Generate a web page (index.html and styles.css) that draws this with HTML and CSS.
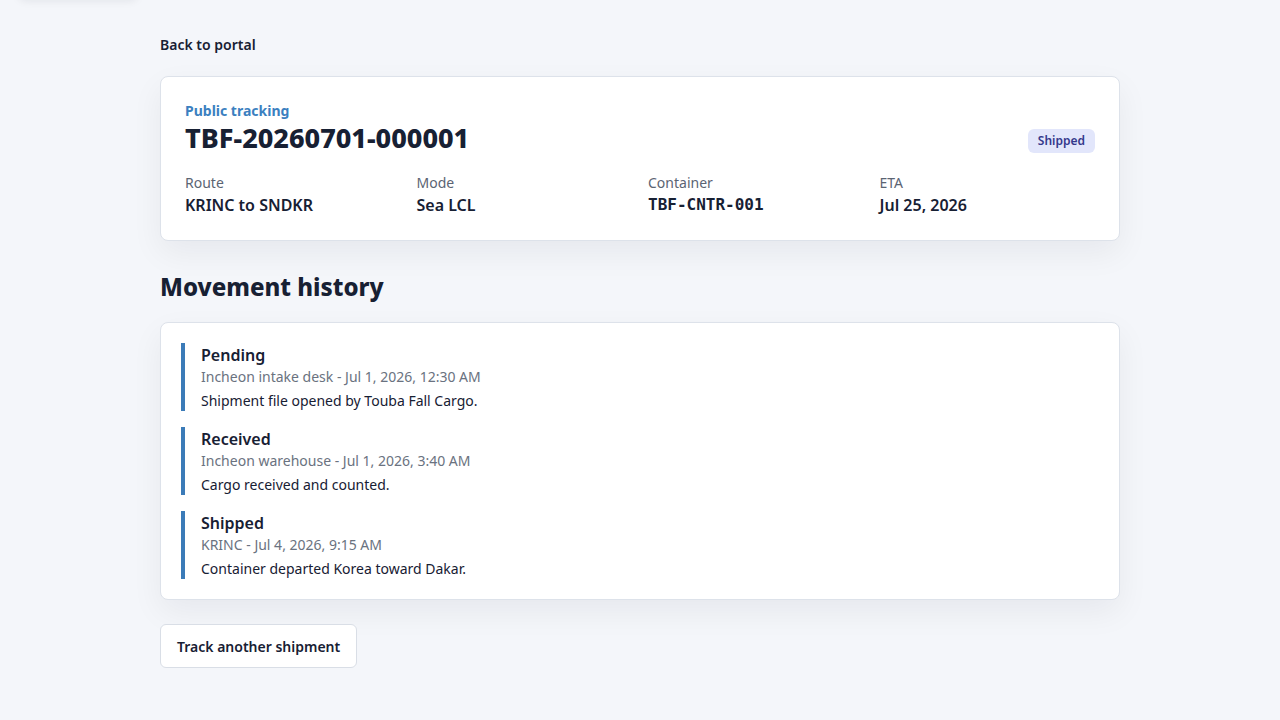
FILE: index.html
```html
<!DOCTYPE html>
<html lang="en">
<head>
<meta charset="utf-8">
<title>Public tracking</title>
<link rel="stylesheet" href="styles.css">
</head>
<body>
<div class="toast-ghost" aria-hidden="true"></div>
<main class="page" id="main">
  <a class="back-link" href="#">Back to portal</a>

  <section class="card summary">
    <div class="summary-head">
      <div>
        <div class="eyebrow">Public tracking</div>
        <h1 class="ref">TBF-20260701-000001</h1>
      </div>
      <span class="badge">Shipped</span>
    </div>
    <dl class="facts">
      <div class="fact"><dt>Route</dt><dd>KRINC to SNDKR</dd></div>
      <div class="fact"><dt>Mode</dt><dd>Sea LCL</dd></div>
      <div class="fact"><dt>Container</dt><dd class="mono">TBF-CNTR-001</dd></div>
      <div class="fact"><dt>ETA</dt><dd>Jul 25, 2026</dd></div>
    </dl>
  </section>

  <h2 class="section-title">Movement history</h2>

  <section class="card history">
    <div class="event">
      <div class="event-title">Pending</div>
      <div class="event-meta">Incheon intake desk - Jul 1, 2026, 12:30 AM</div>
      <div class="event-note">Shipment file opened by Touba Fall Cargo.</div>
    </div>
    <div class="event">
      <div class="event-title">Received</div>
      <div class="event-meta">Incheon warehouse - Jul 1, 2026, 3:40 AM</div>
      <div class="event-note">Cargo received and counted.</div>
    </div>
    <div class="event">
      <div class="event-title">Shipped</div>
      <div class="event-meta">KRINC - Jul 4, 2026, 9:15 AM</div>
      <div class="event-note">Container departed Korea toward Dakar.</div>
    </div>
  </section>

  <button class="btn" type="button">Track another shipment</button>
</main>
</body>
</html>
```

FILE: styles.css
```css
* { box-sizing: border-box; }

html, body {
  margin: 0;
  padding: 0;
}

body {
  background: #f4f6fa;
  font-family: "Noto Sans", "Open Sans", sans-serif;
  color: #172033;
  min-height: 720px;
}

.toast-ghost {
  position: absolute;
  left: 18px;
  top: -46px;
  width: 120px;
  height: 44px;
  background: #ffffff;
  border-radius: 8px;
  box-shadow: 0 3px 8px rgba(15, 23, 42, 0.08);
}

.page {
  width: 960px;
  margin: 0 auto;
  padding-top: 35px;
  display: flex;
  flex-direction: column;
  align-items: stretch;
}

.back-link {
  align-self: flex-start;
  font-size: 14px;
  line-height: 20px;
  font-weight: 600;
  color: #172033;
  text-decoration: none;
  margin-bottom: 21px;
}

.card {
  background: #ffffff;
  border: 1px solid #dde2ea;
  border-radius: 8px;
  box-shadow: 0 12px 32px rgba(15, 23, 42, 0.06);
}

.summary {
  padding: 24px;
}

.summary-head {
  display: flex;
  justify-content: space-between;
  align-items: flex-end;
}

.eyebrow {
  font-size: 14px;
  line-height: 20px;
  font-weight: 700;
  color: #3b80c0;
}

.ref {
  margin: 0;
  font-size: 27px;
  line-height: 33px;
  font-weight: 800;
  color: #172033;
}

.badge {
  display: inline-block;
  font-size: 12px;
  line-height: 24px;
  font-weight: 600;
  color: #34388c;
  background: #e2e6fb;
  border-radius: 6px;
  padding: 0 10px;
  margin-bottom: 1px;
}

.facts {
  display: grid;
  grid-template-columns: repeat(4, 1fr);
  gap: 16px;
  margin: 19px 0 0;
}

.fact dt {
  font-size: 14px;
  line-height: 20px;
  color: #5b6473;
}

.fact dd {
  margin: 1px 0 0;
  font-size: 16px;
  line-height: 22px;
  font-weight: 600;
  color: #172033;
}

.fact dd.mono {
  font-family: "DejaVu Sans Mono", monospace;
  font-size: 16px;
}

.section-title {
  margin: 28px 0 17px;
  font-size: 24px;
  line-height: 36px;
  font-weight: 800;
  color: #172033;
}

.history {
  padding: 20px;
  display: flex;
  flex-direction: column;
  gap: 16px;
}

.event {
  border-left: 4px solid #3b7bb8;
  padding-left: 16px;
}

.event-title {
  font-size: 16px;
  line-height: 24px;
  font-weight: 600;
  color: #172033;
}

.event-meta {
  font-size: 14px;
  line-height: 20px;
  color: #6a7280;
}

.event-note {
  margin-top: 4px;
  font-size: 14px;
  line-height: 20px;
  color: #172033;
}

.btn {
  align-self: flex-start;
  margin-top: 24px;
  height: 44px;
  padding: 0 16px;
  background: #ffffff;
  border: 1px solid #d9dee6;
  border-radius: 6px;
  font-family: "Noto Sans", "Open Sans", sans-serif;
  font-size: 14px;
  font-weight: 600;
  color: #172033;
}
```
